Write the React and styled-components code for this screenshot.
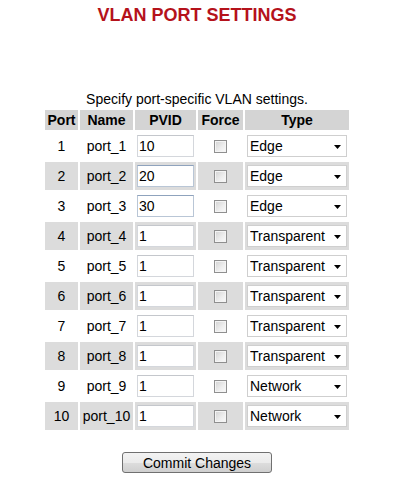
import React, { useState } from 'react';
import styled, { createGlobalStyle } from 'styled-components';

const GlobalStyle = createGlobalStyle`
    body {
        margin: 0;
        background: #fff;
        font-family: "Liberation Sans", Arial, sans-serif;
        color: #000;
    }
`

const Page = styled.div`
    width: 394px;
    text-align: center;
`

const Title = styled.h1`
    margin: 0;
    padding-top: 5px;
    font-size: 18px;
    line-height: 21px;
    font-weight: bold;
    color: #b5121b;
`

const PortTable = styled.table`
    margin: 65px auto 0;
    width: 308px;
    table-layout: fixed;
    border-spacing: 2px;
    font-size: 14px;

    caption {
        line-height: 17px;
        font-size: 14px;
    }
`

const Head = styled.th`
    width: ${p => p.w}px;
    height: 20px;
    padding: 0;
    background: #d4d4d4;
    font-weight: bold;
    font-size: 14px;
`

const Cell = styled.td`
    height: 28px;
    padding: 0;
    text-align: center;
    vertical-align: middle;
    background: ${p => p.shade ? '#dcdcdc' : '#fff'};
`

const PvidInput = styled.input`
    display: block;
    box-sizing: border-box;
    width: 57px;
    height: 22px;
    margin: 0 0 0 2px;
    padding: 0 1px;
    font: 14px "Liberation Sans", Arial, sans-serif;
    color: #000;
    background: #fff;
    border: 1px solid ${p => p.tint ? '#b9c6d6' : '#d4d7dc'};
    border-top-color: ${p => p.tint ? '#8fa3bd' : '#c4c7cc'};
    outline: none;
`

const Check = styled.input`
    appearance: none;
    display: block;
    width: 13px;
    height: 13px;
    margin: 0 auto;
    border: 1px solid #8f8f8f;
    background: linear-gradient(135deg, #d2d2d2 0%, #eeeeee 60%, #fafafa 100%);
    box-shadow: inset 0 0 0 1px #f4f4f4;
`

const SelectWrap = styled.div`
    position: relative;
    width: 100px;
    height: 22px;
    margin-left: 2px;

    svg {
        position: absolute;
        right: 6px;
        top: 10px;
        pointer-events: none;
    }
`

const TypeSelect = styled.select`
    appearance: none;
    display: block;
    box-sizing: border-box;
    width: 100%;
    height: 100%;
    margin: 0;
    padding: 0 0 0 2px;
    font: 14px "Liberation Sans", Arial, sans-serif;
    color: #000;
    background: #fff;
    border: 1px solid #cfcfcf;
    border-radius: 0;
    outline: none;
`

const CommitButton = styled.button`
    display: block;
    margin: 20px auto 0;
    width: 150px;
    height: 21px;
    padding: 0;
    font: 14px "Liberation Sans", Arial, sans-serif;
    color: #000;
    border: 1px solid #707070;
    border-radius: 3px;
    background: linear-gradient(#f3f3f3 0%, #ebebeb 50%, #dddddd 51%, #cfcfcf 100%);
`

const initialPorts = [
    { id: 1, pvid: '10', type: 'Edge' },
    { id: 2, pvid: '20', type: 'Edge' },
    { id: 3, pvid: '30', type: 'Edge' },
    { id: 4, pvid: '1', type: 'Transparent' },
    { id: 5, pvid: '1', type: 'Transparent' },
    { id: 6, pvid: '1', type: 'Transparent' },
    { id: 7, pvid: '1', type: 'Transparent' },
    { id: 8, pvid: '1', type: 'Transparent' },
    { id: 9, pvid: '1', type: 'Network' },
    { id: 10, pvid: '1', type: 'Network' },
]

function Arrow() {
    return (
        <svg width="7" height="4" viewBox="0 0 7 4">
            <path d="M0 0H7L3.5 4Z" fill="#000" />
        </svg>
    )
}

export default function App() {
    const [ports, setPorts] = useState(initialPorts);

    const update = (idx, key, value) => {
        setPorts(ports.map((p, i) => i === idx ? { ...p, [key]: value } : p));
    }

    // 포트 리스트
    const rows = ports.map((val, idx) => {
        const shade = idx % 2 === 1;
        return (
            <tr key={val.id}>
                <Cell shade={shade}>{val.id}</Cell>
                <Cell shade={shade}>port_{val.id}</Cell>
                <Cell shade={shade}>
                    <PvidInput
                        tint={idx === 1 || idx === 2}
                        value={val.pvid}
                        onChange={e => update(idx, 'pvid', e.target.value)}
                    />
                </Cell>
                <Cell shade={shade}>
                    <Check type="checkbox" />
                </Cell>
                <Cell shade={shade}>
                    <SelectWrap>
                        <TypeSelect value={val.type} onChange={e => update(idx, 'type', e.target.value)}>
                            <option>Edge</option>
                            <option>Transparent</option>
                            <option>Network</option>
                        </TypeSelect>
                        <Arrow />
                    </SelectWrap>
                </Cell>
            </tr>
        )
    })

    return (
        <Page>
            <GlobalStyle />
            <Title>VLAN PORT SETTINGS</Title>
            <PortTable>
                <caption>Specify port-specific VLAN settings.</caption>
                <thead>
                    <tr>
                        <Head w={33}>Port</Head>
                        <Head w={53}>Name</Head>
                        <Head w={61}>PVID</Head>
                        <Head w={45}>Force</Head>
                        <Head w={104}>Type</Head>
                    </tr>
                </thead>
                <tbody>
                    {rows}
                </tbody>
            </PortTable>
            <CommitButton>Commit Changes</CommitButton>
        </Page>
    )
}
